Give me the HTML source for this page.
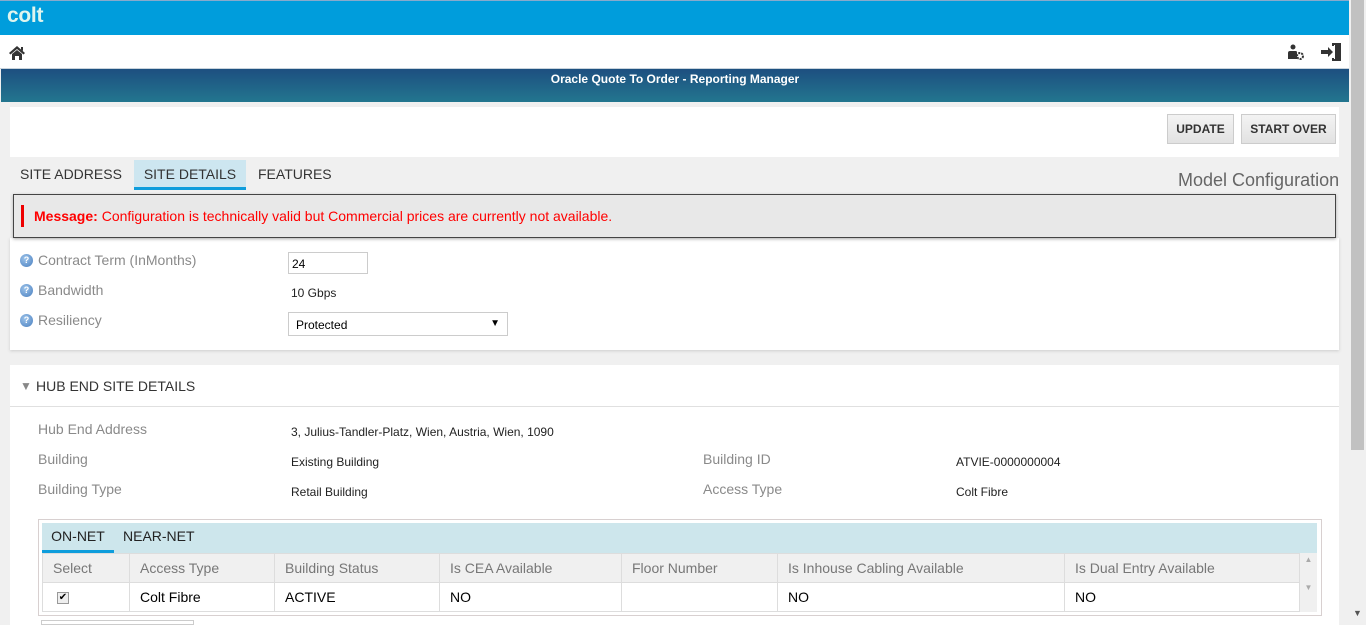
<!DOCTYPE html>
<html><head><meta charset="utf-8"><style>
*{margin:0;padding:0;box-sizing:border-box}
body{width:1366px;height:623px;overflow:hidden;background:#f0f0f0;font-family:"Liberation Sans",Arial,sans-serif;position:relative}
.a{position:absolute}
.lbl{color:#8a8a8a;font-size:14px}
.val{color:#222;font-size:12px}
.q{width:13px;height:13px;border-radius:50%;background:radial-gradient(circle at 40% 35%,#9cc3ea,#4a7fbf);color:#fff;font-size:9px;font-weight:bold;text-align:center;line-height:13px}
table{border-collapse:collapse;font-size:14px}
td{border:1px solid #ddd;padding:0 10px;height:29px}
th{border:1px solid #ddd;padding:0 10px;height:29px;font-weight:normal;color:#777;text-align:left;background:#f0f0f0}
.btn{background:linear-gradient(#f3f3f3,#e2e2e2);border:1px solid #ccc;font-size:12px;font-weight:bold;color:#333;text-align:center;line-height:28px;height:30px}
</style></head><body>
<div class="a" style="left:0;top:0;width:1349px;height:35px;background:#009ddc;border-top:1px solid #8ac"></div>
<div class="a" style="left:7px;top:4px;color:#dff5ee;font-size:21px;font-weight:bold;letter-spacing:-0.3px">colt</div>
<div class="a" style="left:0;top:35px;width:1349px;height:34px;background:#fff;border-bottom:1px solid #c8d3dc"></div>
<svg class="a" style="left:8px;top:45px" width="18" height="16" viewBox="0 0 18 16"><path d="M1 8 L9 1 L17 8 L15.5 9.5 L9 4 L2.5 9.5Z M4 9 L9 5 L14 9 V15 H11 V11 H7 V15 H4Z M13 2 h2 v4 l-2 -1.5z" fill="#333"/></svg>
<svg class="a" style="left:1286px;top:44px" width="20" height="18" viewBox="0 0 20 18"><circle cx="7" cy="3" r="2.5" fill="#333"/><path d="M2 15 V9 Q2 7 4 7 H10 Q11 7 11 9 V15Z" fill="#333"/><circle cx="14" cy="12" r="3" fill="none" stroke="#333" stroke-width="2" stroke-dasharray="2 1"/></svg>
<svg class="a" style="left:1321px;top:42px" width="22" height="20" viewBox="0 0 22 20"><path d="M0 8 H7 V5 L12 10 L7 15 V12 H0Z" fill="#333"/><path d="M11 1 H20 V19 H11 V16 H13 V17 H18 V3 H13 V4 H11Z M14 2 L20 1 V19 L14 18Z" fill="#333"/></svg>
<div class="a" style="left:1px;top:69px;width:1348px;height:33px;background:linear-gradient(#1d4f80,#23768f);color:#fff;font-size:12px;font-weight:bold;text-align:center;line-height:21px">Oracle Quote To Order - Reporting Manager</div>
<div class="a" style="left:1349px;top:0;width:17px;height:623px;background:#f0f0f0"></div>
<div class="a" style="left:1351px;top:0;width:13px;height:450px;background:#c1c1c1"></div>
<div class="a" style="left:1353px;top:608px;color:#555;font-size:9px">▼</div>
<div class="a" style="left:10px;top:107px;width:1329px;height:50px;background:#fff"></div>
<div class="a btn" style="left:1167px;top:114px;width:67px">UPDATE</div>
<div class="a btn" style="left:1241px;top:114px;width:95px">START OVER</div>
<div class="a" style="left:20px;top:166px;font-size:14px;color:#333">SITE ADDRESS</div>
<div class="a" style="left:134px;top:160px;width:112px;height:30px;background:#cde6f0;border-bottom:3px solid #0e9ddc;font-size:14px;color:#333;text-align:center;line-height:28px">SITE DETAILS</div>
<div class="a" style="left:258px;top:166px;font-size:14px;color:#333">FEATURES</div>
<div class="a" style="left:1178px;top:170px;font-size:18px;color:#666">Model Configuration</div>
<div class="a" style="left:10px;top:238px;width:1329px;height:112px;background:#fff;box-shadow:0 1px 3px #ccc"></div>
<div class="a" style="left:13px;top:194px;width:1323px;height:44px;background:#e8e8e8;border:1px solid #444;box-shadow:0 1px 3px #aaa"></div>
<div class="a" style="left:21px;top:205px;width:3px;height:22px;background:#e00"></div>
<div class="a" style="left:34px;top:208px;font-size:14px;color:#f00"><b>Message:</b> Configuration is technically valid but Commercial prices are currently not available.</div>
<div class="a q" style="left:20px;top:254px">?</div><div class="a lbl" style="left:38px;top:252px">Contract Term (InMonths)</div>
<div class="a" style="left:288px;top:252px;width:80px;height:22px;border:1px solid #ccc;background:#fff;font-size:12px;padding:4px 3px">24</div>
<div class="a q" style="left:20px;top:284px">?</div><div class="a lbl" style="left:38px;top:282px">Bandwidth</div>
<div class="a val" style="left:291px;top:286px">10 Gbps</div>
<div class="a q" style="left:20px;top:314px">?</div><div class="a lbl" style="left:38px;top:312px">Resiliency</div>
<div class="a" style="left:288px;top:312px;width:220px;height:24px;border:1px solid #ccc;background:#fff;font-size:12px;padding:5px 7px">Protected<span style="float:right;font-size:10px">▼</span></div>
<div class="a" style="left:10px;top:365px;width:1329px;height:260px;background:#fff"></div>
<div class="a" style="left:10px;top:406px;width:1329px;height:1px;background:#e0e0e0"></div>
<div class="a" style="left:20px;top:379px;font-size:12px;color:#888">▼</div>
<div class="a" style="left:36px;top:378px;font-size:14px;color:#333">HUB END SITE DETAILS</div>
<div class="a lbl" style="left:38px;top:421px">Hub End Address</div><div class="a val" style="left:291px;top:425px">3, Julius-Tandler-Platz, Wien, Austria, Wien, 1090</div>
<div class="a lbl" style="left:38px;top:451px">Building</div><div class="a val" style="left:291px;top:455px">Existing Building</div>
<div class="a lbl" style="left:38px;top:481px">Building Type</div><div class="a val" style="left:291px;top:485px">Retail Building</div>
<div class="a lbl" style="left:703px;top:451px">Building ID</div><div class="a val" style="left:956px;top:455px">ATVIE-0000000004</div>
<div class="a lbl" style="left:703px;top:481px">Access Type</div><div class="a val" style="left:956px;top:485px">Colt Fibre</div>
<div class="a" style="left:38px;top:519px;width:1284px;height:97px;border:1px solid #d8d0d0"></div>
<div class="a" style="left:42px;top:523px;width:1275px;height:30px;background:#cde6ec"></div>
<div class="a" style="left:42px;top:523px;width:72px;height:30px;border-bottom:3px solid #0e9ddc;font-size:14px;color:#222;text-align:center;line-height:26px">ON-NET</div>
<div class="a" style="left:123px;top:528px;font-size:14px;color:#222">NEAR-NET</div>
<div class="a" style="left:1300px;top:553px;width:17px;height:59px;background:#f0f0f0;font-size:8px;color:#aaa;text-align:center;line-height:14px">▲<br><br>▼</div>
<table class="a" style="left:42px;top:553px;width:1258px">
<tr><th style="width:87px">Select</th><th style="width:145px">Access Type</th><th style="width:165px">Building Status</th><th style="width:182px">Is CEA Available</th><th style="width:156px">Floor Number</th><th style="width:287px">Is Inhouse Cabling Available</th><th>Is Dual Entry Available</th></tr>
<tr><td style="padding-left:14px;font-size:11px"><span style="display:inline-block;width:12px;height:12px;border:1px solid #999;background:#eee;line-height:10px;text-align:center;font-size:10px">✔</span></td><td>Colt Fibre</td><td>ACTIVE</td><td>NO</td><td></td><td>NO</td><td>NO</td></tr>
</table>
<div class="a" style="left:41px;top:620px;width:153px;height:5px;border:1px solid #ccc"></div>
</body></html>
